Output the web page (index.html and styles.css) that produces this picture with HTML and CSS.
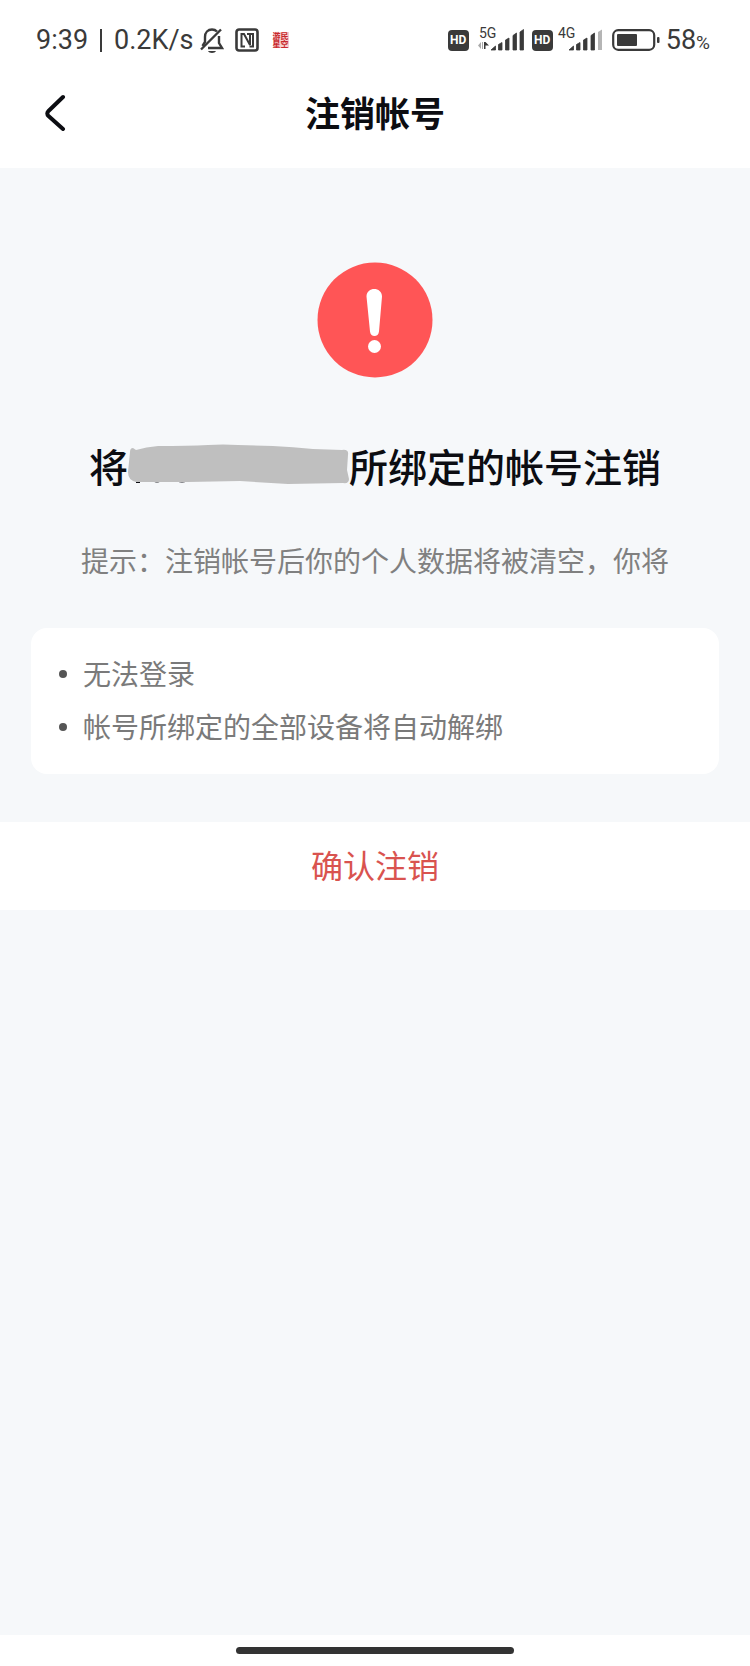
FILE: index.html
```html
<!DOCTYPE html>
<html lang="zh-CN">
<head>
    <meta charset="UTF-8">
    <meta name="viewport" content="width=device-width, initial-scale=1.0">
    <title>注销帐号</title>
    <link rel="stylesheet" href="styles.css">
</head>
<body>
    <div class="status-bar">
        <div class="status-left">
            <span>9:39</span>
            <span class="divider"></span>
            <span>0.2K/s</span>
            <svg class="bell" width="24" height="28" viewBox="0 0 24 28" fill="none" stroke="#3a3a3a" stroke-width="2.400">
                <path d="M5 14V11C5 6.500 8 3.500 12 3.500C14 3.500 15.500 4 17 5.500M19 10V17L22 22H8M1 23.500L21 3.500"/>
                <path d="M5 14V16L2.500 20"/>
                <path d="M8 25H16C15 27.500 9 27.500 8 25Z" fill="#3a3a3a" stroke="none"/>
            </svg>
            <svg class="nfc" width="24" height="24" viewBox="0 0 24 24" fill="none" stroke="#3a3a3a">
                <rect x="1.500" y="1.500" width="21" height="21" rx="2.500" stroke-width="2.600"/>
                <path d="M10 18.500H6.500V6H9L15 17V7" stroke-width="2"/>
                <path d="M12 6H18V18.500H14.500" stroke-width="2"/>
            </svg>
            <span class="seal"><i>游</i><i>民</i><i>星</i><i>空</i></span>
        </div>
        <div class="status-right">
            <span class="hd">HD</span>
            <svg class="signal" width="47" height="32" viewBox="0 0 47 32" fill="#3a3a3a">
                <text x="1" y="14" class="net">5G</text>
                <path d="M3 18V25L0 21.500M4 18H5V25H4Z" fill="#aaa"/>
                <path d="M6 18H7.500L11 21.500H7.500V25H6Z"/>
                <path d="M13 26L17.500 22V26ZM20.500 26V20.500L24 18.500V26ZM27.500 26V16L31 14V26ZM35 26V11.500L38.500 9V26ZM42 26V8L45.500 5.500V26Z" stroke="#3a3a3a" stroke-width=".8" stroke-linejoin="round"/>
            </svg>
            <span class="hd">HD</span>
            <svg class="signal signal-4g" width="45" height="32" viewBox="0 0 45 32" fill="#3a3a3a">
                <text x="0" y="14" class="net">4G</text>
                <path d="M11 26L15.500 22V26ZM18.500 26V20.500L22 18.500V26ZM25.500 26V16L29 14V26ZM33 26V11.500L36.500 9V26Z" stroke="#3a3a3a" stroke-width=".8" stroke-linejoin="round"/>
                <path d="M40 26V8L44 5.500V26Z" fill="#b5b5b5"/>
            </svg>
            <svg class="battery" width="48" height="22" viewBox="0 0 48 22" fill="none">
                <rect x="1.200" y="1.200" width="41" height="19.600" rx="5" stroke="#3a3a3a" stroke-width="2.200"/>
                <rect x="5" y="5" width="20" height="12" rx="1" fill="#3a3a3a"/>
                <rect x="45" y="8" width="2.500" height="6" rx="1" fill="#3a3a3a"/>
            </svg>
            <span>58<small>%</small></span>
        </div>
    </div>

    <header class="nav">
        <button class="back" aria-label="返回">
            <svg width="22" height="38" viewBox="0 0 22 38" fill="none" stroke="#0c0d12" stroke-width="4" stroke-linecap="round" stroke-linejoin="round">
                <path d="M18 4L3.500 18Q1 20.500 3.500 23L18 36"/>
            </svg>
        </button>
        <h1>注销帐号</h1>
    </header>

    <main>
        <svg class="warn" width="116" height="116" viewBox="0 0 116 116">
            <circle cx="58" cy="58" r="57.500" fill="#ff5556"/>
            <path d="M49.500 34.500C49.500 24.500 65 24.500 65 34.500L62 69.500C61.500 75.500 53.500 75.500 53 69.500Z" fill="#fff"/>
            <circle cx="57.500" cy="84.500" r="6.500" fill="#fff"/>
        </svg>

        <h2 class="account">
            <span>将</span>
            <svg class="mask" width="221" height="42" viewBox="0 0 221 42">
                <path d="M8 37H12V39H8ZM25 37H33Q29 40 25 37ZM49 37H59Q54 40 49 37Z" fill="#0c0d12"/>
                <path d="M2 8Q2 4 5 4L8 6Q18 3 30 2Q60 2 80 1Q95 0 110 1L145 2Q165 3 185 5L214 6Q221 5 220 11L219 26L221 35Q221 40 215 39L160 40L112 37L60 38H8Q0 36 0 28Z" fill="#bfbfbf"/>
            </svg>
            <span>所绑定的帐号注销</span>
        </h2>

        <p class="hint">提示：注销帐号后你的个人数据将被清空，你将</p>

        <ul class="effects">
            <li>无法登录</li>
            <li>帐号所绑定的全部设备将自动解绑</li>
        </ul>

        <button class="confirm">确认注销</button>
    </main>

    <footer class="home">
        <div class="home-bar"></div>
    </footer>
</body>
</html>
```
FILE: styles.css
```css
* {
    box-sizing: border-box;
}

body {
    display: flex;
    flex-direction: column;
    min-height: 100vh;
    margin: 0;
    background-color: #fff;
    color: #0c0d12;
    font-family: "Noto Sans CJK SC", sans-serif;
}

h1, h2, p, ul {
    margin: 0;
    padding: 0;
}

button {
    padding: 0;
    border: none;
    background: none;
    font-family: inherit;
    cursor: pointer;
}

svg {
    display: block;
    flex: none;
}

/* status bar */
.status-bar {
    display: flex;
    justify-content: space-between;
    height: 80px;
    padding: 0 40px 0 36px;
    color: #3a3a3a;
    font-family: Roboto, sans-serif;
    font-size: 27px;
}

.status-left,
.status-right {
    display: flex;
    align-items: center;
}

.divider {
    width: 2px;
    height: 23px;
    margin: 0 12px;
    background-color: #3a3a3a;
}

.bell {
    margin-left: 6px;
}

.nfc {
    margin-left: 11px;
}

.seal {
    display: grid;
    grid-template-columns: 8px 8px;
    margin-left: 14px;
    background-color: #f6d0d0;
    color: #c8282c;
    font-family: "Noto Sans CJK SC", sans-serif;
    font-size: 8px;
    font-weight: 700;
    line-height: 8px;
}

.seal i {
    font-style: normal;
}

.hd {
    width: 21px;
    height: 21px;
    border-radius: 4px;
    background-color: #3a3a3a;
    color: #fff;
    font-size: 12px;
    font-weight: 700;
    line-height: 21px;
    text-align: center;
}

.signal {
    margin: 0 7px 0 9px;
    overflow: visible;
}

.signal-4g {
    margin: 0 9px 0 5px;
}

.net {
    font-size: 14px;
}

.battery {
    margin-right: 6px;
}

small {
    font-size: 19px;
}

/* title bar */
.nav {
    display: grid;
    grid-template-columns: 60px 1fr 60px;
    align-items: center;
    padding: 6px 20px 30px;
}

.back {
    display: flex;
    justify-content: flex-end;
    width: 47px;
}

.nav h1 {
    font-size: 35px;
    font-weight: 700;
    line-height: 52px;
    text-align: center;
}

main {
    display: flex;
    flex: 1;
    flex-direction: column;
    padding-top: 94px;
    background-color: #f6f8fa;
}

.warn {
    align-self: center;
}

.account {
    display: flex;
    align-items: center;
    justify-content: center;
    margin-top: 59px;
    font-size: 39px;
    font-weight: 500;
    line-height: 56px;
}

.hint {
    margin-top: 45px;
    color: #808080;
    font-size: 28px;
    line-height: 44px;
    text-align: center;
}

.effects {
    display: flex;
    flex-direction: column;
    gap: 10px;
    margin: 46px 31px 48px;
    padding: 24px 28px 26px;
    border-radius: 16px;
    background-color: #fff;
    color: #7a7a7a;
    font-size: 28px;
    line-height: 43px;
    list-style: none;
}

.effects li {
    display: flex;
    align-items: center;
    gap: 16px;
}

.effects li::before {
    width: 8px;
    height: 8px;
    border-radius: 50%;
    background-color: #555;
    content: "";
}

.confirm {
    height: 88px;
    padding-bottom: 4px;
    background-color: #fff;
    color: #d9534f;
    font-size: 32px;
}

/* gesture bar */
.home {
    padding: 12px 0;
}

.home-bar {
    width: 37%;
    height: 7px;
    margin: 0 auto;
    border-radius: 4px;
    background-color: #333;
}
```
